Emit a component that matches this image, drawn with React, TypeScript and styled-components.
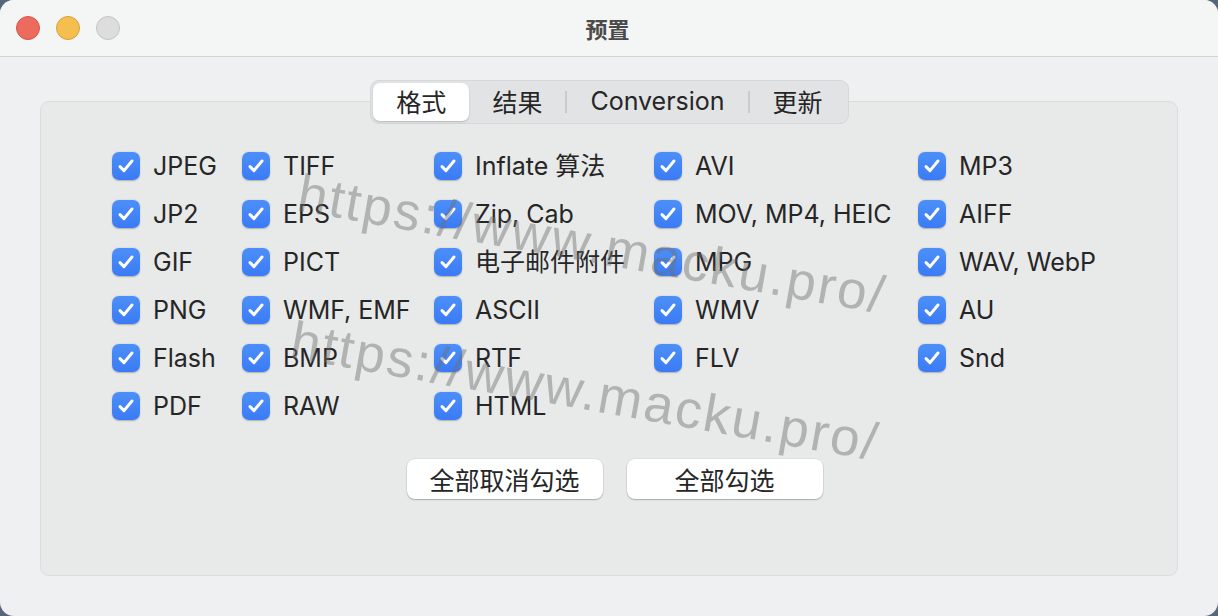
import React from 'react';
import styled, { createGlobalStyle } from 'styled-components';

const GlobalStyle = createGlobalStyle`
  html, body {
    margin: 0;
    padding: 0;
    background: #56677c;
  }
  * {
    box-sizing: border-box;
  }
`;

const columns = [
  ['JPEG', 'JP2', 'GIF', 'PNG', 'Flash', 'PDF'],
  ['TIFF', 'EPS', 'PICT', 'WMF, EMF', 'BMP', 'RAW'],
  ['Inflate 算法', 'Zip, Cab', '电子邮件附件', 'ASCII', 'RTF', 'HTML'],
  ['AVI', 'MOV, MP4, HEIC', 'MPG', 'WMV', 'FLV'],
  ['MP3', 'AIFF', 'WAV, WebP', 'AU', 'Snd'],
];

const tabs = ['格式', '结果', 'Conversion', '更新'];

const CheckItem = ({ label }: { label: string }) => (
  <Item>
    <Box>
      <svg width="18" height="16" viewBox="0 0 18 16">
        <path
          d="M3 8.6 L7 12.6 L15 3"
          fill="none"
          stroke="#fff"
          strokeWidth="3"
          strokeLinecap="round"
          strokeLinejoin="round"
        />
      </svg>
    </Box>
    <Label>{label}</Label>
  </Item>
);

const App = () => {
  return (
    <>
      <GlobalStyle />
      <Window>
        <TitleBar>
          <Lights>
            <Light color="#ec6a5e" border="#d0574c" />
            <Light color="#f4bf4f" border="#d6a23c" />
            <Light color="#dcdddc" border="#c4c4c4" />
          </Lights>
          <Title>预置</Title>
          <div />
        </TitleBar>
        <Content>
          <Tabs>
            {tabs.map((t, i) => (
              <React.Fragment key={t}>
                {i > 1 && <Divider />}
                <Tab active={i === 0}>{t}</Tab>
              </React.Fragment>
            ))}
          </Tabs>
          <Panel>
            <Grid>
              {columns.map((col) =>
                col.map((label, r) => (
                  <Cell key={label} style={{ gridRow: r + 1 }}>
                    <CheckItem label={label} />
                  </Cell>
                ))
              )}
            </Grid>
            <Buttons>
              <Button>全部取消勾选</Button>
              <Button>全部勾选</Button>
            </Buttons>
          </Panel>
        </Content>
        <Watermark top={162} left={304}>https://www.macku.pro/</Watermark>
        <Watermark top={309} left={297}>https://www.macku.pro/</Watermark>
      </Window>
    </>
  );
};

const Window = styled.div`
  position: relative;
  width: 1218px;
  height: 616px;
  border-radius: 14px;
  background: #eff0f2;
  overflow: hidden;
  display: flex;
  flex-direction: column;
  font-family: Inter, "Noto Sans CJK SC", sans-serif;
  color: #262626;
`;

const TitleBar = styled.div`
  height: 57px;
  flex-shrink: 0;
  display: grid;
  grid-template-columns: 1fr auto 1fr;
  align-items: center;
  background: #f4f5f5;
  border-bottom: 1px solid #d3d3d3;
`;

const Lights = styled.div`
  display: flex;
  gap: 16px;
  padding-left: 16px;
`;

const Light = styled.div<{ color: string; border: string }>`
  width: 24px;
  height: 24px;
  border-radius: 50%;
  background: ${(p) => p.color};
  border: 1px solid ${(p) => p.border};
`;

const Title = styled.div`
  font-size: 22px;
  font-weight: 700;
  color: #4a4a4a;
  margin-right: 3px;
`;

const Content = styled.div`
  flex: 1;
  display: flex;
  flex-direction: column;
  align-items: center;
  padding: 23px 40px 40px 40px;
`;

const Tabs = styled.div`
  position: relative;
  z-index: 1;
  display: flex;
  align-items: center;
  height: 44px;
  padding: 2px;
  margin-left: 1px;
  margin-bottom: -23px;
  border-radius: 9px;
  background: #e2e3e5;
  border: 1px solid #d6d7d9;
`;

const Tab = styled.div<{ active: boolean }>`
  height: 38px;
  display: flex;
  align-items: center;
  padding: 0 23px 2px;
  font-size: 25px;
  border-radius: 7px;
  background: ${(p) => (p.active ? '#ffffff' : 'transparent')};
  box-shadow: ${(p) => (p.active ? '0 1px 2px rgba(0,0,0,0.2)' : 'none')};
`;

const Divider = styled.div`
  width: 2px;
  height: 22px;
  background: #cacbcd;
`;

const Panel = styled.div`
  align-self: stretch;
  flex: 1;
  display: flex;
  flex-direction: column;
  padding: 40px 0 0 71px;
  background: #e8e9e9;
  border: 1px solid #dbdcdc;
  border-radius: 9px;
`;

const Grid = styled.div`
  display: grid;
  grid-template-columns: 130px 192px 220px 264px auto;
  grid-template-rows: repeat(6, 48px);
  grid-auto-flow: column;
`;

const Cell = styled.div`
  display: flex;
  align-items: center;
`;

const Item = styled.div`
  display: flex;
  align-items: center;
  gap: 13px;
`;

const Box = styled.div`
  width: 28px;
  height: 28px;
  border-radius: 7px;
  background: linear-gradient(#4d8ff8, #3a7bf6);
  box-shadow: 0 0.5px 1.5px rgba(0, 0, 0, 0.25);
  display: flex;
  align-items: center;
  justify-content: center;
`;

const Label = styled.span`
  font-size: 25px;
  line-height: 28px;
  white-space: nowrap;
`;

const Buttons = styled.div`
  display: flex;
  justify-content: center;
  gap: 24px;
  margin-top: 29px;
  padding-right: 60px;
`;

const Button = styled.button`
  width: 196px;
  height: 40px;
  border: none;
  border-radius: 8px;
  background: #ffffff;
  box-shadow: 0 1px 1.5px rgba(0, 0, 0, 0.25), 0 0 0 0.5px rgba(0, 0, 0, 0.08);
  font-family: Inter, "Noto Sans CJK SC", sans-serif;
  font-size: 25px;
  color: #262626;
  padding: 0;
`;

const Watermark = styled.div<{ top: number; left: number }>`
  position: absolute;
  top: ${(p) => p.top}px;
  left: ${(p) => p.left}px;
  font-family: "Liberation Sans", sans-serif;
  font-size: 53px;
  letter-spacing: 2.2px;
  color: rgba(110, 110, 110, 0.45);
  transform: rotate(10deg);
  transform-origin: 0 0;
  white-space: nowrap;
  pointer-events: none;
`;

export default App;
